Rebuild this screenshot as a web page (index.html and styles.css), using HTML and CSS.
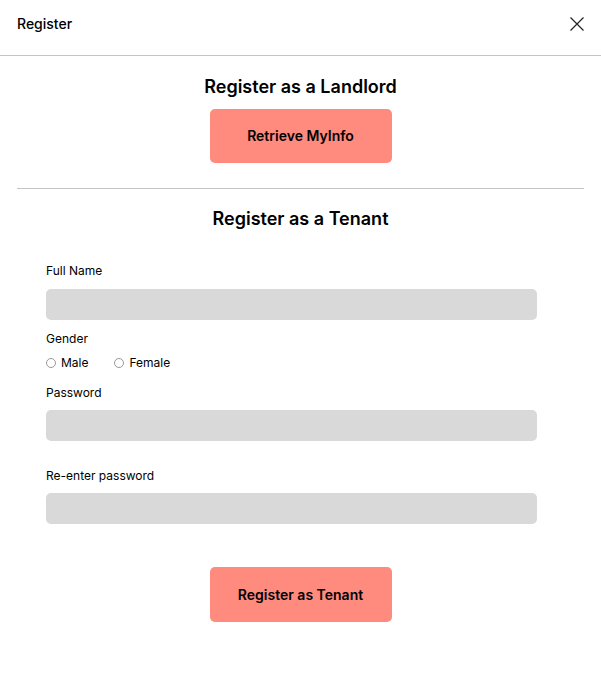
FILE: index.html
```html
<!DOCTYPE html>
<html>
<head>
<meta charset="utf-8">
<link rel="stylesheet" href="styles.css">
</head>
<body>
<div class="modal">
  <header class="header">
    <span class="header-title">Register</span>
    <svg class="close" width="16" height="16" viewBox="0 0 16 16"><path d="M1.5 1.5 L14.5 14.5 M14.5 1.5 L1.5 14.5" stroke="#222" stroke-width="1.2" fill="none"/></svg>
  </header>
  <section class="landlord">
    <h2 class="title">Register as a Landlord</h2>
    <button class="btn">Retrieve MyInfo</button>
  </section>
  <hr class="divider">
  <section class="tenant">
    <h2 class="title">Register as a Tenant</h2>
    <form class="form">
      <label class="label label-first">Full Name</label>
      <div class="input"></div>
      <label class="label">Gender</label>
      <div class="radios">
        <span class="radio"><span class="circle"></span>Male</span>
        <span class="radio"><span class="circle"></span>Female</span>
      </div>
      <label class="label label-pw">Password</label>
      <div class="input"></div>
      <label class="label label-re">Re-enter password</label>
      <div class="input"></div>
    </form>
    <button class="btn btn-tenant">Register as Tenant</button>
  </section>
</div>
</body>
</html>
```
FILE: styles.css
```css
* { box-sizing: border-box; }
body {
  margin: 0;
  background: #fff;
  font-family: Inter, "Noto Sans", sans-serif;
  color: #000;
}
.header {
  height: 56px;
  border-bottom: 1px solid #c4c4c4;
  display: flex;
  align-items: center;
  justify-content: space-between;
  padding: 0 16px 8px 17px;
}
.header-title {
  font-family: Inter, sans-serif;
  font-weight: 500;
  font-size: 14px;
}
.close { display: block; }
.landlord {
  display: flex;
  flex-direction: column;
  align-items: center;
  padding-top: 20px;
}
.title {
  margin: 0;
  font-size: 18px;
  line-height: 22px;
  font-weight: 600;
}
.btn {
  border: none;
  background: #ff8a7e;
  border-radius: 5px;
  width: 182px;
  height: 54px;
  padding-bottom: 2px;
  font-family: Inter, sans-serif;
  font-weight: 600;
  font-size: 14px;
  color: #000;
  margin-top: 11px;
}
.divider {
  margin: 25px 17px 0;
  border: none;
  border-top: 1px solid #c4c4c4;
}
.tenant {
  display: flex;
  flex-direction: column;
  align-items: center;
  padding-top: 19px;
}
.form {
  align-self: stretch;
  padding: 0 64px 0 46px;
  display: flex;
  flex-direction: column;
}
.label {
  font-size: 12px;
  line-height: 15px;
  margin-top: 11px;
  margin-bottom: 10.5px;
}
.label-first { margin-top: 33px; }
.label-pw { margin-top: 14.5px; margin-bottom: 10px; }
.label-re { margin-top: 27.5px; margin-bottom: 10px; }
.input {
  height: 31px;
  background: #d9d9d9;
  border-radius: 5px;
}
.label + .radios { margin-top: -1px; }
.radios {
  display: flex;
  gap: 26px;
  font-size: 12px;
  line-height: 15px;
}
.radio {
  display: flex;
  align-items: center;
  gap: 5px;
}
.circle {
  width: 10px;
  height: 10px;
  border: 1px solid #9a9a9a;
  border-radius: 50%;
}
.btn-tenant { margin-top: 43px; height: 55px; }
```
